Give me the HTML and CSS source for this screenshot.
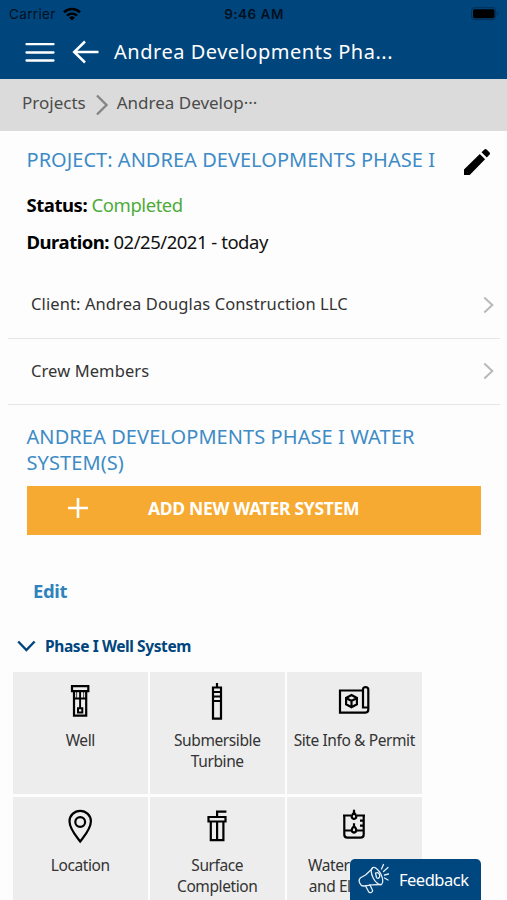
FILE: index.html
```html
<!DOCTYPE html>
<html lang="en">
<head>
<meta charset="utf-8">
<title>Project</title>
<link rel="stylesheet" href="styles.css">
</head>
<body>
<div class="screen">
  <header class="header">
    <div class="status-bar">
      <div class="carrier"><span>Carrier</span>
        <svg width="18" height="14" viewBox="0 0 18 14" fill="none" stroke="#000"><path d="M1 5.2a11.6 11.6 0 0 1 16 0" stroke-width="2.6"/><path d="M4 8.6a7.3 7.3 0 0 1 10 0" stroke-width="2.4"/><path d="M6 10.6a4.4 4.4 0 0 1 6 0L9 13.6z" fill="#000" stroke="none"/></svg>
      </div>
      <span class="clock">9:46 AM</span>
      <svg class="battery" width="28" height="14" viewBox="0 0 28 14"><rect x=".6" y=".6" width="24" height="12" rx="3.4" fill="none" stroke="#00345f" stroke-width="1.2"/><rect x="2" y="2.2" width="21.5" height="9" rx="1.6"/><path d="M26 4.5v4.2q1.6-.6 1.6-2.1T26 4.5z" fill="#00345f"/></svg>
    </div>
    <div class="nav">
      <svg class="menu" width="30" height="20" viewBox="0 0 30 20" stroke="#fff" stroke-width="2.3" stroke-linecap="round"><path d="M1.5 2.2h27M1.5 10.500h27M1.5 18.500h27"/></svg>
      <svg class="back" width="28" height="24" viewBox="0 0 28 24" fill="none" stroke="#fff" stroke-width="2.5"><path d="M13 1.500 2.200 12 13 22.500M2.200 12H26.500"/></svg>
      <h1 class="title">Andrea Developments Pha...</h1>
    </div>
  </header>
  <nav class="crumbs">
    <span>Projects</span>
    <svg width="12" height="22" viewBox="0 0 12 22" fill="none" stroke="#858585" stroke-width="2.400"><path d="m1 1.500 9.500 9.500L1 20.500"/></svg>
    <span>Andrea Develop···</span>
  </nav>
  <section class="project">
    <div class="heading-row">
      <h2 class="heading">PROJECT: ANDREA DEVELOPMENTS PHASE I</h2>
      <svg width="28" height="28" viewBox="0 0 28 28"><path d="M1 21.500 16.800 6l5.300 5.300L6.700 27H1zM18.500 4.300l2.900-2.900q1.100-1 2.200 0l3 3q1 1 0 2L23.800 9.600z"/></svg>
    </div>
    <p class="fact status"><b>Status:</b> <span class="done">Completed</span></p>
    <p class="fact duration"><b>Duration:</b> <span>02/25/2021 - today</span></p>
  </section>
  <div class="links">
    <div class="link-row"><span>Client: Andrea Douglas Construction LLC</span><svg width="11" height="18" viewBox="0 0 11 18" fill="none" stroke="#b9b9b9" stroke-width="2"><path d="m1.300 1.500 8 7.500-8 7.500"/></svg></div>
    <div class="link-row"><span>Crew Members</span><svg width="11" height="18" viewBox="0 0 11 18" fill="none" stroke="#b9b9b9" stroke-width="2"><path d="m1.300 1.500 8 7.500-8 7.500"/></svg></div>
  </div>
  <section class="systems">
    <h2 class="heading systems-name">ANDREA DEVELOPMENTS PHASE I WATER<br>SYSTEM(S)</h2>
    <div class="add-button">
      <svg width="20" height="20" viewBox="0 0 20 20" stroke="#fff" stroke-width="2.600"><path d="M10 0v20M0 10h20"/></svg>
      <span>ADD NEW WATER SYSTEM</span>
    </div>
    <div class="edit">Edit</div>
  </section>
  <div class="group-title">
    <svg width="19" height="12" viewBox="0 0 19 12" fill="none" stroke="#00457d" stroke-width="2.400"><path d="m1.200 1.500 8.200 8.500 8.200-8.500"/></svg>
    <span>Phase I Well System</span>
  </div>
  <main class="tiles">
    <div class="tile">
      <svg viewBox="0 0 36 36" fill="none" stroke="#000" stroke-width="2.200"><path d="M10 3.200h16.300v5H10zM12 8.200h12.200v24.500H12z"/><path d="M12 15.500h12.200M18.100 8.200v17" stroke-width="1.900"/><path d="M14.600 8.200v7M21.600 8.200v7" stroke-width=".7"/><path d="M16 25.200h4.300v4.300H16z" stroke-width="2"/></svg>
      <span>Well</span>
    </div>
    <div class="tile">
      <svg viewBox="0 0 36 36" fill="none" stroke="#000" stroke-width="2.200"><path d="M14 4.500h8V35.700h-8zM18 0v4.500M14 9h8M14 13.500h8M14 18h8"/></svg>
      <span>Submersible<br>Turbine</span>
    </div>
    <div class="tile">
      <svg viewBox="0 0 36 36" fill="none" stroke="#000" stroke-width="2.200"><path d="M27 7.500H4v22.200h25.500q2.800-.4 2.800-3.200V6.500q0-2.300-2.700-2.300T27 6.500v18h5"/><path d="m15.500 12 5.400 3v6.300l-5.400 3-5.400-3V15zM10.100 15l5.400 3 5.400-3M15.500 18v6.300"/></svg>
      <span>Site Info &amp; Permit</span>
    </div>
    <div class="tile">
      <svg viewBox="0 0 36 36" fill="none" stroke="#000" stroke-width="2.200"><path d="M18.200 33.500C14.500 28.500 7.500 21 7.500 13.200a10.700 10.400 0 0 1 21.400 0C28.900 21 21.900 28.500 18.200 33.500z"/><circle cx="18.200" cy="14" r="4.900"/></svg>
      <span>Location</span>
    </div>
    <div class="tile">
      <svg viewBox="0 0 36 36" fill="none" stroke="#000" stroke-width="2.200"><path d="M9.500 9h17v4.500h-17zM11.800 13.500h12.600v18.700H11.800zM18.100 13.500v18.700M18.100 9V3.700h9.300"/></svg>
      <span>Surface<br>Completion</span>
    </div>
    <div class="tile">
      <svg viewBox="0 0 36 36" fill="none" stroke="#000" stroke-width="2.200"><path d="M7 7.500h8m6 0h8M8.300 7.500v19q0 3.200 3.200 3.200h13q3.200 0 3.200-3.200v-19M8.300 22.500h7m5.500 0h7M24 12.700h4m-4 5h4"/><path d="M18 4.500q-2.300 2.500-2.300 4.200T18 11q2.300-.6 2.300-2.300T18 4.500zM18 1.700v3M18 18q-2.300 2.500-2.300 4.300T18 24.600q2.300-.5 2.300-2.300T18 18zM18 15.200v3"/></svg>
      <span>Water Source<br>and Electrical</span>
    </div>
  </main>
  <div class="feedback">
    <svg width="34" height="34" viewBox="0 0 34 34" fill="none" stroke="#e4eef7" stroke-width="1.300" stroke-linecap="round" stroke-linejoin="round"><path d="m15.500 5.500-7 6.500-5 2.700q-3 3 .5 7.300 1.500 1.500 4 .8l7-1 9.500-.3"/><ellipse cx="20" cy="13" rx="4.300" ry="9.500" transform="rotate(-27 20 13)"/><path d="M18.500 10q3-1.200 4 1.500t-1.500 4l-1.500-.8zM8.500 22.800l3 5.700q.8 1.700 3 .8 1.700-1 .8-2.500l-2.500-5M24.500 6l2-4.500M26.500 8.500l4.500-4M27.500 12l4-1M27.500 15l3.500 2"/></svg>
    <span>Feedback</span>
  </div>
</div>
</body>
</html>
```
FILE: styles.css
```css
* { box-sizing: border-box; }
body { margin: 0; background: #fdfdfd; font-family: "Noto Sans", "Open Sans", sans-serif; color: #333; }
svg { display: block; flex: none; overflow: visible; }
h1, h2, p { margin: 0; font-weight: 400; }
span, b, h1, h2 { white-space: nowrap; }

.screen { position: relative; height: 900px; overflow: hidden; }

.header { height: 79px; background: #00467d; }
.status-bar { display: grid; grid-template-columns: 1fr auto 1fr; align-items: center; height: 27px; padding: 0 8px 0 9px; font: 13.5px Inter, sans-serif; color: #00101f; }
.carrier { display: flex; gap: 7px; align-items: center; letter-spacing: .35px; }
.clock { font-weight: 600; letter-spacing: .5px; }
.battery { justify-self: end; }
.nav { display: flex; align-items: center; height: 50px; padding-left: 25px; }
.back { margin-left: 17px; }
.title { margin: -1px 0 0 14px; font-size: 20px; letter-spacing: .52px; color: #fff; }

.crumbs { display: flex; align-items: center; height: 52px; padding: 0 0 5px 22px; background: #dbdbdb; font-size: 17px; color: #4b4b4b; }
.crumbs svg { margin: 4px 9px 0 10px; }

.project { height: 141px; padding: 14px 16px 0 26.5px; }
.heading { font-size: 20px; line-height: 26px; letter-spacing: .03px; color: #3e8bc6; }
.heading-row { display: flex; justify-content: space-between; align-items: center; height: 30px; }
.heading-row svg { margin-top: 4px; }
.fact { font-size: 18.5px; line-height: 37px; letter-spacing: -.45px; color: #111; }
.status { margin-top: 11px; }
.duration { letter-spacing: -.48px; }
.fact b { color: #000; }
.done { color: #4dac39; }

.links { padding: 0 7px 0 8px; }
.link-row { display: flex; align-items: center; justify-content: space-between; height: 66.5px; padding: 0 6px 0 23px; border-bottom: 1px solid #e6e6e6; font-size: 16.5px; letter-spacing: .1px; }
.link-row span { margin-top: -2px; }

.systems { padding: 19px 26px 0 26.5px; }
.systems-name { letter-spacing: .08px; }
.add-button { display: flex; align-items: center; width: 454.5px; height: 49px; margin-top: 9.5px; padding: 0 0 5px 41.5px; background: #f6aa31; color: #fff; font-size: 17.5px; font-weight: 700; letter-spacing: -.31px; }
.add-button span { margin-left: 60px; }
.edit { margin: 42.5px 0 0 6.5px; font-size: 18.5px; line-height: 28px; font-weight: 700; letter-spacing: -.4px; color: #2f83bd; }

.group-title { display: flex; align-items: center; gap: 9px; height: 24px; margin-top: 29px; padding-left: 17px; font-size: 15.5px; font-weight: 700; letter-spacing: -.4px; color: #00457d; }

.tiles { display: grid; grid-template-columns: repeat(3, 134.5px); grid-auto-rows: 122px; gap: 2.5px; margin: 14px 0 0 13px; }
.tile { display: flex; flex-direction: column; align-items: center; padding-top: 11px; background: #ededed; text-align: center; font-size: 15.5px; line-height: 21px; letter-spacing: -.4px; color: #333; }
.tile svg { width: 36px; height: 36px; margin-bottom: 11px; }

.feedback { position: absolute; left: 350px; top: 859px; display: flex; align-items: center; gap: 8px; width: 130.5px; height: 41px; padding-left: 7px; border-radius: 5px 5px 0 0; background: #00467f; color: #fff; font-size: 16.5px; letter-spacing: -.5px; }
```
